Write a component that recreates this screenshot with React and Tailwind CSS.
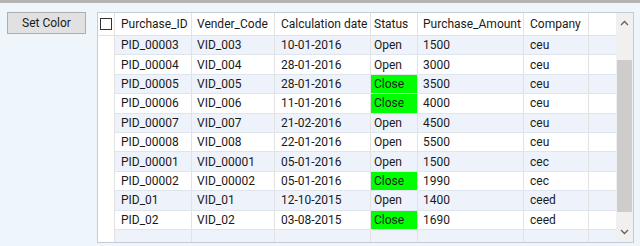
import React from "react";

const rows = [
  ["PID_00003", "VID_003", "10-01-2016", "Open", "1500", "ceu"],
  ["PID_00004", "VID_004", "28-01-2016", "Open", "3000", "ceu"],
  ["PID_00005", "VID_005", "28-01-2016", "Close", "3500", "ceu"],
  ["PID_00006", "VID_006", "11-01-2016", "Close", "4000", "ceu"],
  ["PID_00007", "VID_007", "21-02-2016", "Open", "4500", "ceu"],
  ["PID_00008", "VID_008", "22-01-2016", "Open", "5500", "ceu"],
  ["PID_00001", "VID_00001", "05-01-2016", "Open", "1500", "cec"],
  ["PID_00002", "VID_00002", "05-01-2016", "Close", "1990", "cec"],
  ["PID_01", "VID_01", "12-10-2015", "Open", "1400", "ceed"],
  ["PID_02", "VID_02", "03-08-2015", "Close", "1690", "ceed"],
];

const cols = [
  { title: "Purchase_ID", cls: "w-[77px] pl-[6px]" },
  { title: "Vender_Code", cls: "w-[83px] pl-[5px]" },
  { title: "Calculation date", cls: "w-[96px] pl-[6px]" },
  { title: "Status", cls: "w-[47px] pl-[3px]" },
  { title: "Purchase_Amount", cls: "w-[106px] pl-[5px]" },
  { title: "Company", cls: "w-[65px] pl-[6px]" },
];

function Chevron({ up }) {
  return (
    <svg width="9" height="6" viewBox="0 0 9 6" className="text-[#606060]">
      <path
        d={up ? "M1 5 L4.5 1.5 L8 5" : "M1 1 L4.5 4.5 L8 1"}
        fill="none"
        stroke="currentColor"
        strokeWidth="1.3"
      />
    </svg>
  );
}

export default function App() {
  return (
    <div className="w-[640px] h-[246px] bg-[#eef5fb] flex flex-col overflow-hidden font-['Roboto',sans-serif] text-[12px] text-[#1a1a1a]">
      <div className="h-[3px] bg-[#b4b4b4] shrink-0" />

      <div className="flex pl-[7px] pt-[9px] gap-[11px]">
        {/* button */}
        <button className="w-[79px] h-[22px] bg-[#e1e1e1] border border-[#adadad] text-[12px] leading-none text-[#1a1a1a]">
          Set Color
        </button>

        {/* grid */}
        <div className="w-[537px] h-[231px] border border-[#c5ccd4] bg-white flex">
          <div className="w-[518px] flex flex-col">
            {/* header */}
            <div className="flex h-[23px] border-b border-[#e2e2e2] shrink-0">
              <div className="w-[17px] border-r border-[#e2e2e2] flex items-center justify-center">
                <div className="w-[12px] h-[12px] border border-[#333] bg-white" />
              </div>
              {cols.map((c) => (
                <div
                  key={c.title}
                  className={`${c.cls} border-r border-[#e2e2e2] flex items-center whitespace-nowrap`}
                >
                  {c.title}
                </div>
              ))}
              <div className="flex-1" />
            </div>

            {/* body */}
            <div className="flex-1 flex">
              <div className="w-[17px] border-r border-[#e2e2e2] bg-white" />
              <div className="flex-1 flex flex-col">
                {rows.map((r, i) => (
                  <div
                    key={i}
                    className={`flex h-[19.4px] border-b border-[#dfe5ec] ${
                      i % 2 === 0 ? "bg-[#eef3fb]" : "bg-white"
                    }`}
                  >
                    {r.map((v, j) => (
                      <div
                        key={j}
                        className={`${cols[j].cls} border-r border-[#e2e2e2] flex items-center whitespace-nowrap ${
                          j === 3 && v === "Close" ? "bg-[#00ff00]" : ""
                        }`}
                      >
                        {v}
                      </div>
                    ))}
                    <div className="flex-1" />
                  </div>
                ))}
                {/* new row */}
                <div className="flex flex-1 bg-[#eef3fb]">
                  {cols.map((c) => (
                    <div key={c.title} className={`${c.cls} border-r border-[#e2e2e2]`} />
                  ))}
                  <div className="flex-1" />
                </div>
              </div>
            </div>
          </div>

          {/* scrollbar */}
          <div className="w-[17px] bg-[#f0f0f0] flex flex-col items-center">
            <div className="h-[20px] flex items-center justify-center">
              <Chevron up />
            </div>
            <div className="w-[15px] h-[152px] mt-[27px] bg-[#cdcdcd]" />
            <div className="flex-1" />
            <div className="h-[20px] flex items-center justify-center">
              <Chevron />
            </div>
          </div>
        </div>
      </div>
    </div>
  );
}
